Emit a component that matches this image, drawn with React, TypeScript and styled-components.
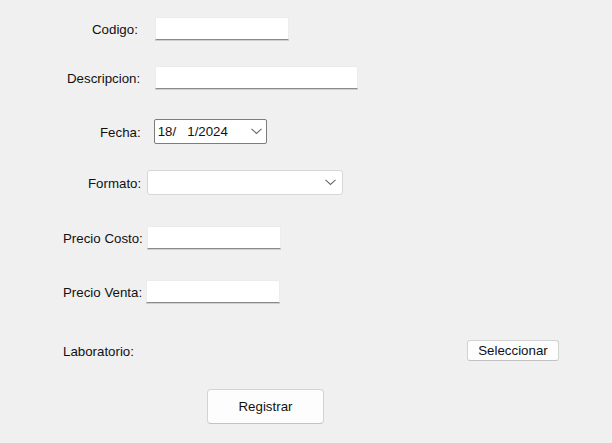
import * as React from "react";
import styled, { createGlobalStyle } from "styled-components";

const GlobalStyle = createGlobalStyle`
  body {
    margin: 0;
    background: #f0f0f0;
    font-family: "Liberation Sans", Arial, sans-serif;
    font-size: 13.3px;
    color: #111;
  }
`;

const Form = styled.div`
  width: 612px;
  height: 443px;
  background: #f0f0f0;
  display: flex;
  flex-direction: column;
  padding-top: 17px;
  box-sizing: border-box;
`;

const Row = styled.div<{ $top: number; $indent: number; $gap: number }>`
  display: flex;
  align-items: center;
  margin-top: ${(p) => p.$top}px;
  padding-left: ${(p) => p.$indent}px;
  padding-right: 53px;
  gap: ${(p) => p.$gap}px;
`;

const Label = styled.span`
  white-space: nowrap;
  line-height: 16px;
  padding-top: 2px;
`;

const TextBox = styled.input<{ $w: number }>`
  width: ${(p) => p.$w}px;
  height: 23px;
  box-sizing: border-box;
  background: #fff;
  border: 1px solid #ececec;
  border-bottom: 1px solid #8a8a8a;
  box-shadow: 0 1px 0 #cfcfcf;
  border-radius: 2px 2px 0 0;
  outline: none;
  padding: 0 4px;
  font: inherit;
`;

const DateBox = styled.div`
  width: 113px;
  height: 25px;
  box-sizing: border-box;
  background: #fff;
  border: 1px solid #7c7c7c;
  border-radius: 2px;
  display: flex;
  align-items: center;
  padding: 0 4px 0 3px;
  white-space: pre;
  font-size: 13.3px;
  justify-content: space-between;
`;

const ComboBox = styled.div`
  width: 196px;
  height: 25px;
  box-sizing: border-box;
  background: #fff;
  border: 1px solid #d6d6d6;
  border-radius: 3px;
  display: flex;
  align-items: center;
  justify-content: flex-end;
  padding-right: 6px;
`;

const Button = styled.button<{ $w: number; $h: number }>`
  width: ${(p) => p.$w}px;
  height: ${(p) => p.$h}px;
  background: #fdfdfd;
  border: 1px solid #d3d3d3;
  border-bottom-color: #c2c2c2;
  border-radius: ${(p) => (p.$h > 30 ? 4 : 3)}px;
  font: inherit;
  color: #111;
  padding: 0;
`;

const PushRight = styled.div`
  margin-left: auto;
`;

const Chevron = () => (
  <svg width="11" height="7" viewBox="0 0 11 7">
    <polyline points="0.5,0.8 5.5,5.5 10.5,0.8" fill="none" stroke="#6a6a6a" strokeWidth="1.1" />
  </svg>
);

const App = () => {
  return (
    <Form>
      <GlobalStyle />
      <Row $top={0} $indent={92} $gap={17}>
        <Label>Codigo:</Label>
        <TextBox $w={134} />
      </Row>
      <Row $top={26} $indent={67} $gap={15}>
        <Label>Descripcion:</Label>
        <TextBox $w={203} />
      </Row>
      <Row $top={30} $indent={100} $gap={13}>
        <Label>Fecha:</Label>
        <DateBox>
          <span>{"18/ \u20071/2024"}</span>
          <Chevron />
        </DateBox>
      </Row>
      <Row $top={26} $indent={88} $gap={6}>
        <Label>Formato:</Label>
        <ComboBox>
          <Chevron />
        </ComboBox>
      </Row>
      <Row $top={31} $indent={63} $gap={4}>
        <Label>Precio Costo:</Label>
        <TextBox $w={134} />
      </Row>
      <Row $top={31} $indent={63} $gap={4}>
        <Label>Precio Venta:</Label>
        <TextBox $w={134} />
      </Row>
      <Row $top={37} $indent={63} $gap={0}>
        <Label>Laboratorio:</Label>
        <PushRight>
          <Button $w={92} $h={21}>Seleccionar</Button>
        </PushRight>
      </Row>
      <Row $top={28} $indent={207} $gap={0}>
        <Button $w={117} $h={35}>Registrar</Button>
      </Row>
    </Form>
  );
};

export default App;
